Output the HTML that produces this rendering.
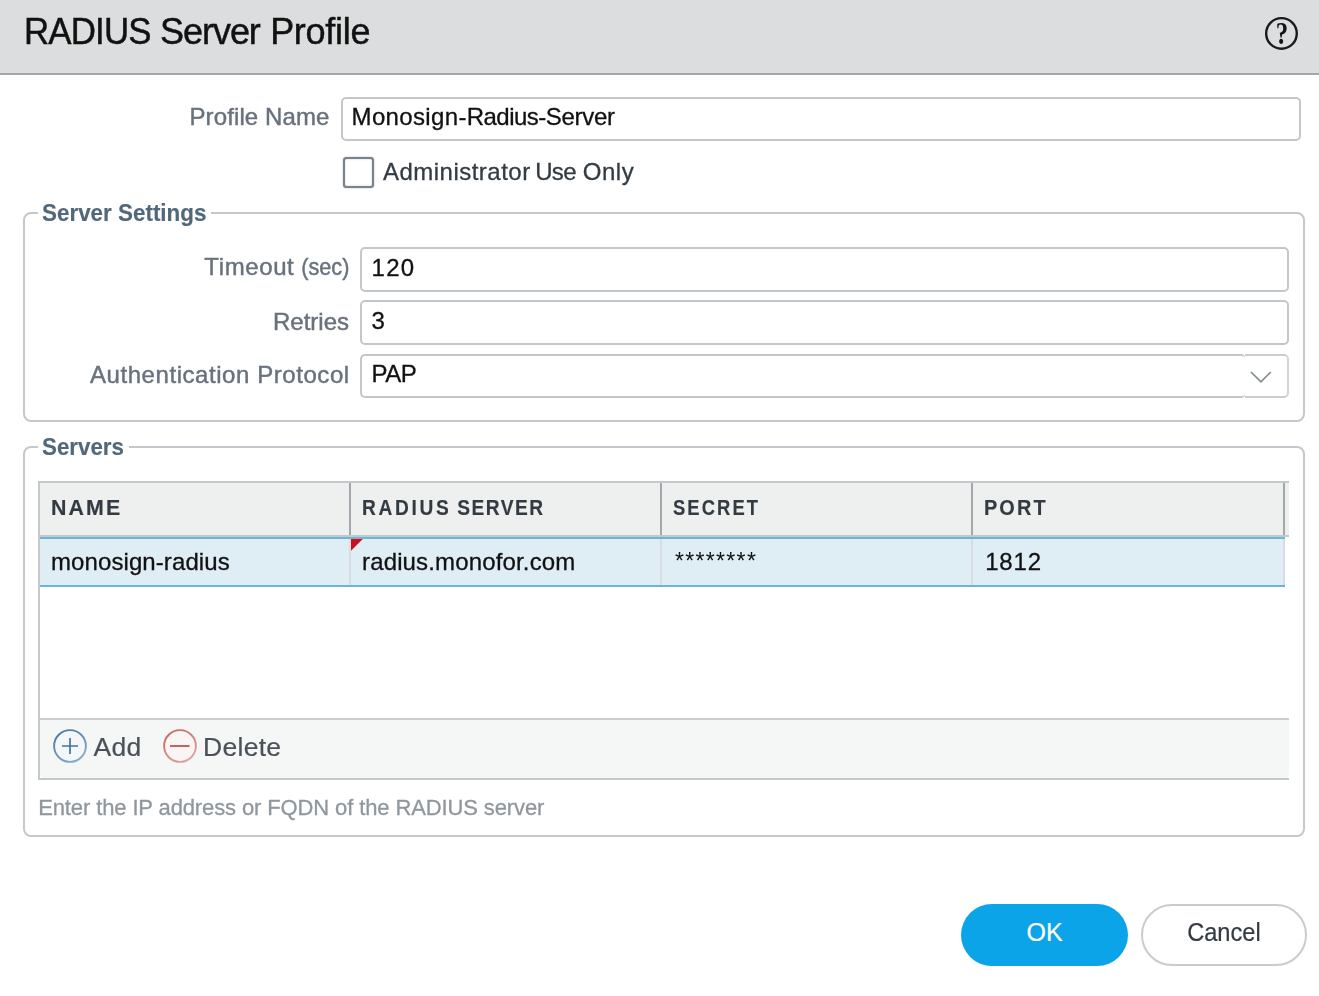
<!DOCTYPE html>
<html lang="en">
<head>
<meta charset="utf-8">
<title>RADIUS Server Profile</title>
<style>
html,body{margin:0;padding:0;}
body{width:1319px;height:996px;background:#fff;position:relative;overflow:hidden;
 font-family:"Liberation Sans",sans-serif;color:#000;}
.abs{position:absolute;white-space:nowrap;will-change:opacity;-webkit-text-stroke:0.45px currentColor;}
#hdr{left:0;top:0;width:1319px;height:73px;background:#dcddde;border-bottom:2px solid #a1a6aa;box-sizing:content-box;}
#title{left:23px;top:9.5px;font-size:36px;line-height:44px;color:#111;letter-spacing:-0.85px;}
.lbl{color:#68727c;font-size:24px;line-height:30px;text-align:right;}
.inp{border:2px solid #c3c7cb;border-radius:5px;background:#fff;box-sizing:border-box;}
.val{-webkit-text-stroke:0.3px currentColor;font-size:24px;line-height:30px;color:#111;}
.fs{border:2px solid #c4c8cc;border-radius:8px;box-sizing:border-box;}
.leg{-webkit-text-stroke:0.15px currentColor;color:#51677a;font-weight:bold;font-size:24px;line-height:30px;transform-origin:0 50%;}
.legbg{background:#fff;height:12px;}
.th{-webkit-text-stroke:0.15px currentColor;font-size:22px;font-weight:bold;transform-origin:0 50%;color:#333b42;line-height:26px;}
.td{-webkit-text-stroke:0.3px currentColor;font-size:24px;line-height:30px;color:#111;}
</style>
</head>
<body>
<div class="abs" id="hdr"></div>
<div class="abs" id="title"><span id="t1" style="display:inline-block;transform:scaleX(0.968);transform-origin:0 50%;margin-left:0.7px;margin-right:-4.3px">RADIUS</span> <span id="t2" style="letter-spacing:-1.05px;margin-left:0.6px">Server</span> <span id="t3" style="letter-spacing:-0.28px;margin-left:1.2px">Profile</span></div>
<svg class="abs" id="help" style="left:1263px;top:15px" width="38" height="38" viewBox="0 0 38 38">
 <circle cx="18.48" cy="18.44" r="15.3" fill="none" stroke="#1a1a1a" stroke-width="2.4"/>
 <text transform="translate(18.98 29.2) scale(0.8 1)" text-anchor="middle" font-family="Liberation Serif, serif" font-weight="bold" font-size="31" fill="#151515">?</text>
</svg>

<div class="abs lbl" id="l1" style="left:100px;width:229.6px;top:102px;letter-spacing:0.12px;">Profile Name</div>
<div class="abs inp" id="i1" style="left:341px;top:97px;width:960px;height:44px;"></div>
<div class="abs val" id="v1" style="left:351.6px;top:102px;letter-spacing:-0.06px;"><span id="v1a" style="letter-spacing:0.34px">Monosign-</span><span id="v1b" style="letter-spacing:-0.52px">Radius-</span><span id="v1c" style="letter-spacing:-0.29px">Server</span></div>

<div class="abs" id="cb" style="left:343px;top:157px;width:31px;height:31px;box-sizing:border-box;border:2px solid #7a828a;border-radius:3.5px;background:#fff;box-shadow:0 0 1.5px rgba(110,120,130,.75), inset 0 0 1.5px rgba(110,120,130,.6);"></div>
<div class="abs val" id="cbl" style="left:383px;top:157px;color:#333b42;letter-spacing:0.17px;"><span id="cba" style="letter-spacing:0.48px">Administrator</span> <span id="cbb" style="letter-spacing:-0.68px;margin-left:-2.3px">Use</span> <span id="cbc" style="letter-spacing:0.57px">Only</span></div>

<div class="abs fs" id="fs1" style="left:23px;top:212px;width:1282px;height:210px;"></div>
<div class="abs legbg" id="legbg1" style="left:38px;top:207px;width:173px;"></div>
<div class="abs leg" id="leg1" style="left:42.4px;top:198px;transform:scaleX(0.934);">Server Settings</div>

<div class="abs lbl" id="l2" style="left:60px;width:289px;top:252px;"><span id="l2a" style="letter-spacing:0.6px">Timeout</span> <span id="l2b" style="display:inline-block;transform:scaleX(0.9);transform-origin:100% 50%;margin-left:-5.4px;">(sec)</span></div>
<div class="abs inp" id="i2" style="left:360px;top:247px;width:929px;height:45px;"></div>
<div class="abs val" id="v2" style="left:371.5px;top:253px;letter-spacing:1.3px;">120</div>

<div class="abs lbl" id="l3" style="left:60px;width:289px;top:307px;">Retries</div>
<div class="abs inp" id="i3" style="left:360px;top:300px;width:929px;height:45px;"></div>
<div class="abs val" id="v3" style="left:371.5px;top:306px;">3</div>

<div class="abs lbl" id="l4" style="left:60px;width:289.7px;top:360px;letter-spacing:0.56px;">Authentication Protocol</div>
<div class="abs inp" id="i4" style="left:360px;top:354px;width:885px;height:44px;border-right:none;border-radius:5px 4px 4px 5px;"></div>
<div class="abs val" id="v4" style="left:371.5px;top:359px;letter-spacing:-0.5px;">PAP</div>
<div class="abs" id="trig" style="left:1245px;top:354px;width:44px;height:44px;box-sizing:border-box;border:2px solid #c9cdd0;border-right-color:#d3d6d9;border-left:none;background:#fff;border-radius:0 5px 5px 0;"></div>
<svg class="abs" id="chev" style="left:1250.4px;top:370.6px" width="22" height="13" viewBox="0 0 22 13"><path d="M1 1 L10.9 10.9 L20.8 1" fill="none" stroke="#838c93" stroke-width="1.7"/></svg>

<div class="abs fs" id="fs2" style="left:23px;top:446px;width:1282px;height:391px;"></div>
<div class="abs legbg" id="legbg2" style="left:38px;top:441px;width:91px;"></div>
<div class="abs leg" id="leg2" style="left:42.4px;top:432px;transform:scaleX(0.93);">Servers</div>

<div class="abs" id="grid" style="left:38px;top:481px;width:1251px;height:299px;box-sizing:border-box;border:2px solid #c6c9cc;border-right:none;background:#fff;"></div>
<div class="abs" id="ghead" style="left:40px;top:483px;width:1249px;height:52px;background:#eeefef;border-bottom:2px solid #c6c9cc;"></div>
<div class="abs" id="sep1" style="left:349px;top:483px;width:2px;height:52px;background:#a3a8ac;"></div>
<div class="abs" id="sep2" style="left:660px;top:483px;width:2px;height:52px;background:#a3a8ac;"></div>
<div class="abs" id="sep3" style="left:971px;top:483px;width:2px;height:52px;background:#a3a8ac;"></div>
<div class="abs" id="sep4" style="left:1283px;top:483px;width:2px;height:52px;background:#a3a8ac;"></div>
<div class="abs th" id="th1" style="left:51px;top:495px;letter-spacing:2.16px;transform:scaleX(0.971);">NAME</div>
<div class="abs th" id="th2" style="left:362px;top:495px;letter-spacing:2.41px;transform:scaleX(0.870);"><span style="letter-spacing:3.10px">RADIUS</span> <span style="letter-spacing:1.74px;margin-left:-1.99px">SERVER</span></div>
<div class="abs th" id="th3" style="left:673px;top:495px;letter-spacing:2.51px;transform:scaleX(0.835);">SECRET</div>
<div class="abs th" id="th4" style="left:984px;top:495px;letter-spacing:2.32px;transform:scaleX(0.904);">PORT</div>

<div class="abs" id="row" style="left:40px;top:537px;width:1245px;height:50px;box-sizing:border-box;background:#dfedf5;border-top:2px solid #6ab4de;border-bottom:2px solid #6ab4de;"></div>
<div class="abs" id="rs1" style="left:349px;top:539px;width:2px;height:46px;background:#d8dde1;"></div>
<div class="abs" id="rs2" style="left:660px;top:539px;width:2px;height:46px;background:#d8dde1;"></div>
<div class="abs" id="rs3" style="left:971px;top:539px;width:2px;height:46px;background:#d8dde1;"></div>
<div class="abs" id="rs4" style="left:1283px;top:539px;width:2px;height:46px;background:#d8dde1;"></div>
<svg class="abs" id="dirty" style="left:351px;top:539px" width="13" height="13" viewBox="0 0 13 13"><path d="M0 0 H11.8 L0 11.8 Z" fill="#cc0f1c"/></svg>
<div class="abs td" id="td1" style="left:51px;top:547px;letter-spacing:0.09px;">monosign-radius</div>
<div class="abs td" id="td2" style="left:362px;top:547px;letter-spacing:0.15px;">radius.monofor.com</div>
<div class="abs td" id="td3" style="-webkit-text-stroke:0;left:675px;top:545.5px;font-size:23px;letter-spacing:1.32px;">********</div>
<div class="abs td" id="td4" style="left:985.2px;top:547px;letter-spacing:0.8px;">1812</div>

<div class="abs" id="tbar" style="left:40px;top:718px;width:1249px;height:58px;background:#f5f7f7;border-top:2px solid #cdd0d3;border-radius:0 0 4px 4px;"></div>
<svg class="abs" id="addi" style="left:51.9px;top:727.7px" width="36" height="36" viewBox="0 0 36 36">
 <defs><linearGradient id="gb" x1="0" y1="0" x2="0.6" y2="1"><stop offset="0" stop-color="#41759f"/><stop offset="1" stop-color="#86a9c8"/></linearGradient></defs>
 <circle cx="18" cy="18" r="15.9" fill="#f4f7f8" stroke="url(#gb)" stroke-width="1.9"/>
 <path d="M18 10 V26 M10 18 H26" stroke="#41759f" stroke-width="1.7" fill="none"/>
</svg>
<div class="abs" id="addt" style="-webkit-text-stroke:0.2px currentColor;left:93.4px;top:730px;letter-spacing:0.4px;font-size:26.5px;line-height:34px;color:#4a5158;">Add</div>
<svg class="abs" id="deli" style="left:161.6px;top:727.7px" width="36" height="36" viewBox="0 0 36 36">
 <defs><linearGradient id="gr" x1="0" y1="0" x2="0.6" y2="1"><stop offset="0" stop-color="#c3625b"/><stop offset="1" stop-color="#dfa29d"/></linearGradient></defs>
 <circle cx="18" cy="18" r="15.9" fill="#f8f5f4" stroke="url(#gr)" stroke-width="1.9"/>
 <path d="M8 18 H27.5" stroke="#c25a53" stroke-width="1.9" fill="none"/>
</svg>
<div class="abs" id="delt" style="-webkit-text-stroke:0.2px currentColor;left:203px;top:730px;letter-spacing:0.3px;font-size:26.5px;line-height:34px;color:#4a5158;">Delete</div>

<div class="abs" id="hint" style="left:38.2px;top:793.6px;letter-spacing:-0.12px;font-size:22px;line-height:28px;color:#8f979d;-webkit-text-stroke:0.3px currentColor;">Enter the IP address or FQDN of the RADIUS server</div>

<div class="abs" id="ok" style="left:961px;top:904px;width:167px;height:62px;border-radius:31px;background:#0ba4e8;color:#fff;font-size:25px;line-height:56px;text-align:center;-webkit-text-stroke:0.2px currentColor;">OK</div>
<div class="abs" id="cancel" style="left:1141px;top:904px;width:166px;height:62px;border-radius:31px;background:#fff;border:2px solid #c9cccf;box-sizing:border-box;color:#333b42;font-size:25px;line-height:52px;text-align:center;-webkit-text-stroke:0.2px currentColor;"><span style="display:inline-block;transform:scaleX(0.945);">Cancel</span></div>
</body>
</html>
